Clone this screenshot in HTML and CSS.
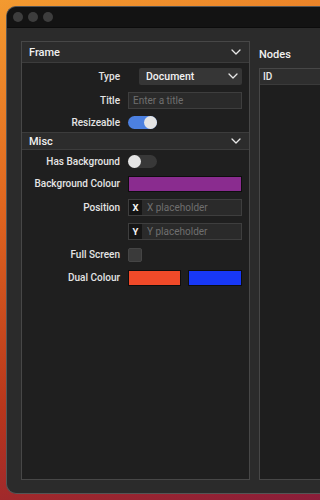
FILE: index.html
```html
<!DOCTYPE html>
<html>
<head>
<meta charset="utf-8">
<link rel="stylesheet" href="styles.css">
</head>
<body>
<div class="window">
  <div class="titlebar">
    <span class="light"></span><span class="light"></span><span class="light"></span>
  </div>
  <div class="content">
    <div class="panel">
      <div class="section">
        <div class="header header-first">
          <span>Frame</span>
          <svg class="chev" width="10" height="6" viewBox="0 0 10 6"><path d="M1 1 L5 5 L9 1" fill="none" stroke="#e8e8e8" stroke-width="1.3" stroke-linecap="round" stroke-linejoin="round"/></svg>
        </div>
        <div class="body body-first">
          <div class="row r24">
            <div class="label">Type</div>
            <div class="ctrl">
              <div class="select">
                <span>Document</span>
                <svg width="10" height="6" viewBox="0 0 10 6"><path d="M1 1 L5 5 L9 1" fill="none" stroke="#e8e8e8" stroke-width="1.3" stroke-linecap="round" stroke-linejoin="round"/></svg>
              </div>
            </div>
          </div>
          <div class="row r24">
            <div class="label">Title</div>
            <div class="ctrl"><div class="input"><span class="ph">Enter a title</span></div></div>
          </div>
          <div class="row r20">
            <div class="label">Resizeable</div>
            <div class="ctrl"><div class="toggle on"><span class="knob"></span></div></div>
          </div>
        </div>
      </div>
      <div class="section section-next">
        <div class="header header-next">
          <span>Misc</span>
          <svg class="chev" width="10" height="6" viewBox="0 0 10 6"><path d="M1 1 L5 5 L9 1" fill="none" stroke="#e8e8e8" stroke-width="1.3" stroke-linecap="round" stroke-linejoin="round"/></svg>
        </div>
        <div class="body">
          <div class="row r22">
            <div class="label">Has Background</div>
            <div class="ctrl"><div class="toggle off"><span class="knob"></span></div></div>
          </div>
          <div class="row r23">
            <div class="label">Background Colour</div>
            <div class="ctrl"><div class="swatch purple"></div></div>
          </div>
          <div class="row r24">
            <div class="label">Position</div>
            <div class="ctrl"><div class="input prefixed"><span class="prefix">X</span><span class="ph">X placeholder</span></div></div>
          </div>
          <div class="row r24">
            <div class="label"></div>
            <div class="ctrl"><div class="input prefixed"><span class="prefix">Y</span><span class="ph">Y placeholder</span></div></div>
          </div>
          <div class="row r23">
            <div class="label">Full Screen</div>
            <div class="ctrl"><div class="checkbox"></div></div>
          </div>
          <div class="row r23">
            <div class="label">Dual Colour</div>
            <div class="ctrl dual"><div class="swatch red"></div><div class="swatch blue"></div></div>
          </div>
        </div>
      </div>
    </div>
    <div class="side">
      <div class="side-title">Nodes</div>
      <div class="table">
        <div class="thead">ID</div>
        <div class="tbody"></div>
      </div>
    </div>
  </div>
</div>
</body>
</html>
```

FILE: styles.css
```css
html, body {
  margin: 0;
  padding: 0;
  overflow: hidden;
}
body {
  height: 500px;
  background: linear-gradient(165deg, #f39a30 0%, #e0661f 35%, #b8361c 70%, #8a1d3a 100%);
  font-family: Roboto, Inter, sans-serif;
  color: #e8e8e8;
}
.window {
  margin: 6px 0 0 6px;
  height: 488px;
  box-sizing: border-box;
  border: 1px solid #555;
  border-right: none;
  border-radius: 10px 0 0 10px;
  background: #2b2b2b;
  display: flex;
  flex-direction: column;
  overflow: hidden;
}
.titlebar {
  height: 21px;
  flex: none;
  background: #131313;
  display: flex;
  align-items: center;
  gap: 5px;
  padding-left: 6px;
  border-bottom: 1px solid #0c0c0c;
  box-sizing: border-box;
}
.light {
  width: 10px;
  height: 10px;
  border-radius: 50%;
  background: #3d3d3d;
}
.content {
  flex: 1;
  display: flex;
  gap: 9px;
  padding: 13px 0 13px 14px;
  min-height: 0;
  min-width: 0;
}
.panel {
  width: 229px;
  flex: none;
  box-sizing: border-box;
  border: 1px solid #474747;
  background: #1f1f1f;
}
.header {
  display: flex;
  align-items: center;
  justify-content: space-between;
  padding: 0 8px 0 7px;
  background: #2c2c2c;
  border-bottom: 1px solid #3c3c3c;
  font-size: 11px;
  font-weight: 500;
  color: #f0f0f0;
}
.header-first { height: 20px; }
.header-next { height: 16px; }
.section-next { border-top: 1px solid #3c3c3c; }
.body-first { padding-top: 1px; }
.row {
  display: grid;
  grid-template-columns: 98px 114px;
  column-gap: 8px;
  align-items: center;
}
.r24 { height: 24px; }
.r23 { height: 23px; }
.r22 { height: 22px; }
.r20 { height: 20px; }
.label {
  text-align: right;
  font-size: 10px;
  font-weight: 500;
  color: #e4e4e4;
  white-space: nowrap;
}
.ctrl {
  display: flex;
  align-items: center;
}
.select {
  margin-left: 11px;
  width: 103px;
  height: 17px;
  box-sizing: border-box;
  background: #363636;
  border-radius: 2px;
  display: flex;
  align-items: center;
  justify-content: space-between;
  padding: 0 4px 0 7px;
  font-size: 10.5px;
  font-weight: 500;
  color: #f2f2f2;
}
.input {
  width: 114px;
  height: 17px;
  box-sizing: border-box;
  background: #2a2a2a;
  border: 1px solid #3e3e3e;
  display: flex;
  align-items: center;
  padding-left: 4px;
  font-size: 10px;
}
.ph { color: #6f6f6f; }
.prefixed { padding-left: 0; }
.prefix {
  width: 13px;
  align-self: stretch;
  background: #151515;
  color: #f4f4f4;
  font-weight: 700;
  font-size: 9.5px;
  display: flex;
  align-items: center;
  justify-content: center;
  margin-right: 5px;
}
.toggle {
  width: 29px;
  height: 13px;
  border-radius: 7px;
  position: relative;
}
.toggle.on { background: #4c80e0; }
.toggle.off { background: #383838; }
.knob {
  position: absolute;
  top: 0;
  width: 13px;
  height: 13px;
  border-radius: 50%;
  background: #e4e4e4;
}
.on .knob { right: 0; }
.off .knob { left: 0; }
.swatch {
  height: 16px;
  box-sizing: border-box;
  border: 1px solid #0e0e0e;
}
.purple { width: 114px; background: #8a2c8f; }
.dual { gap: 7px; }
.red { width: 53px; background: #f14a29; }
.blue { width: 54px; background: #1838f6; }
.checkbox {
  width: 14px;
  height: 14px;
  box-sizing: border-box;
  background: #3a3a3a;
  border: 1px solid #454545;
  border-radius: 2px;
}
.side {
  flex: 1;
  min-width: 0;
  display: flex;
  flex-direction: column;
}
.side-title {
  height: 27px;
  display: flex;
  align-items: center;
  font-size: 11px;
  font-weight: 500;
  color: #f0f0f0;
}
.table {
  flex: 1;
  border: 1px solid #474747;
  border-right: none;
  display: flex;
  flex-direction: column;
}
.thead {
  height: 15px;
  background: #2e2e2e;
  font-size: 10px;
  font-weight: 500;
  padding-left: 3px;
  display: flex;
  align-items: center;
  border-bottom: 1px solid #3a3a3a;
}
.tbody {
  flex: 1;
  background: #1e1e1e;
}
```
